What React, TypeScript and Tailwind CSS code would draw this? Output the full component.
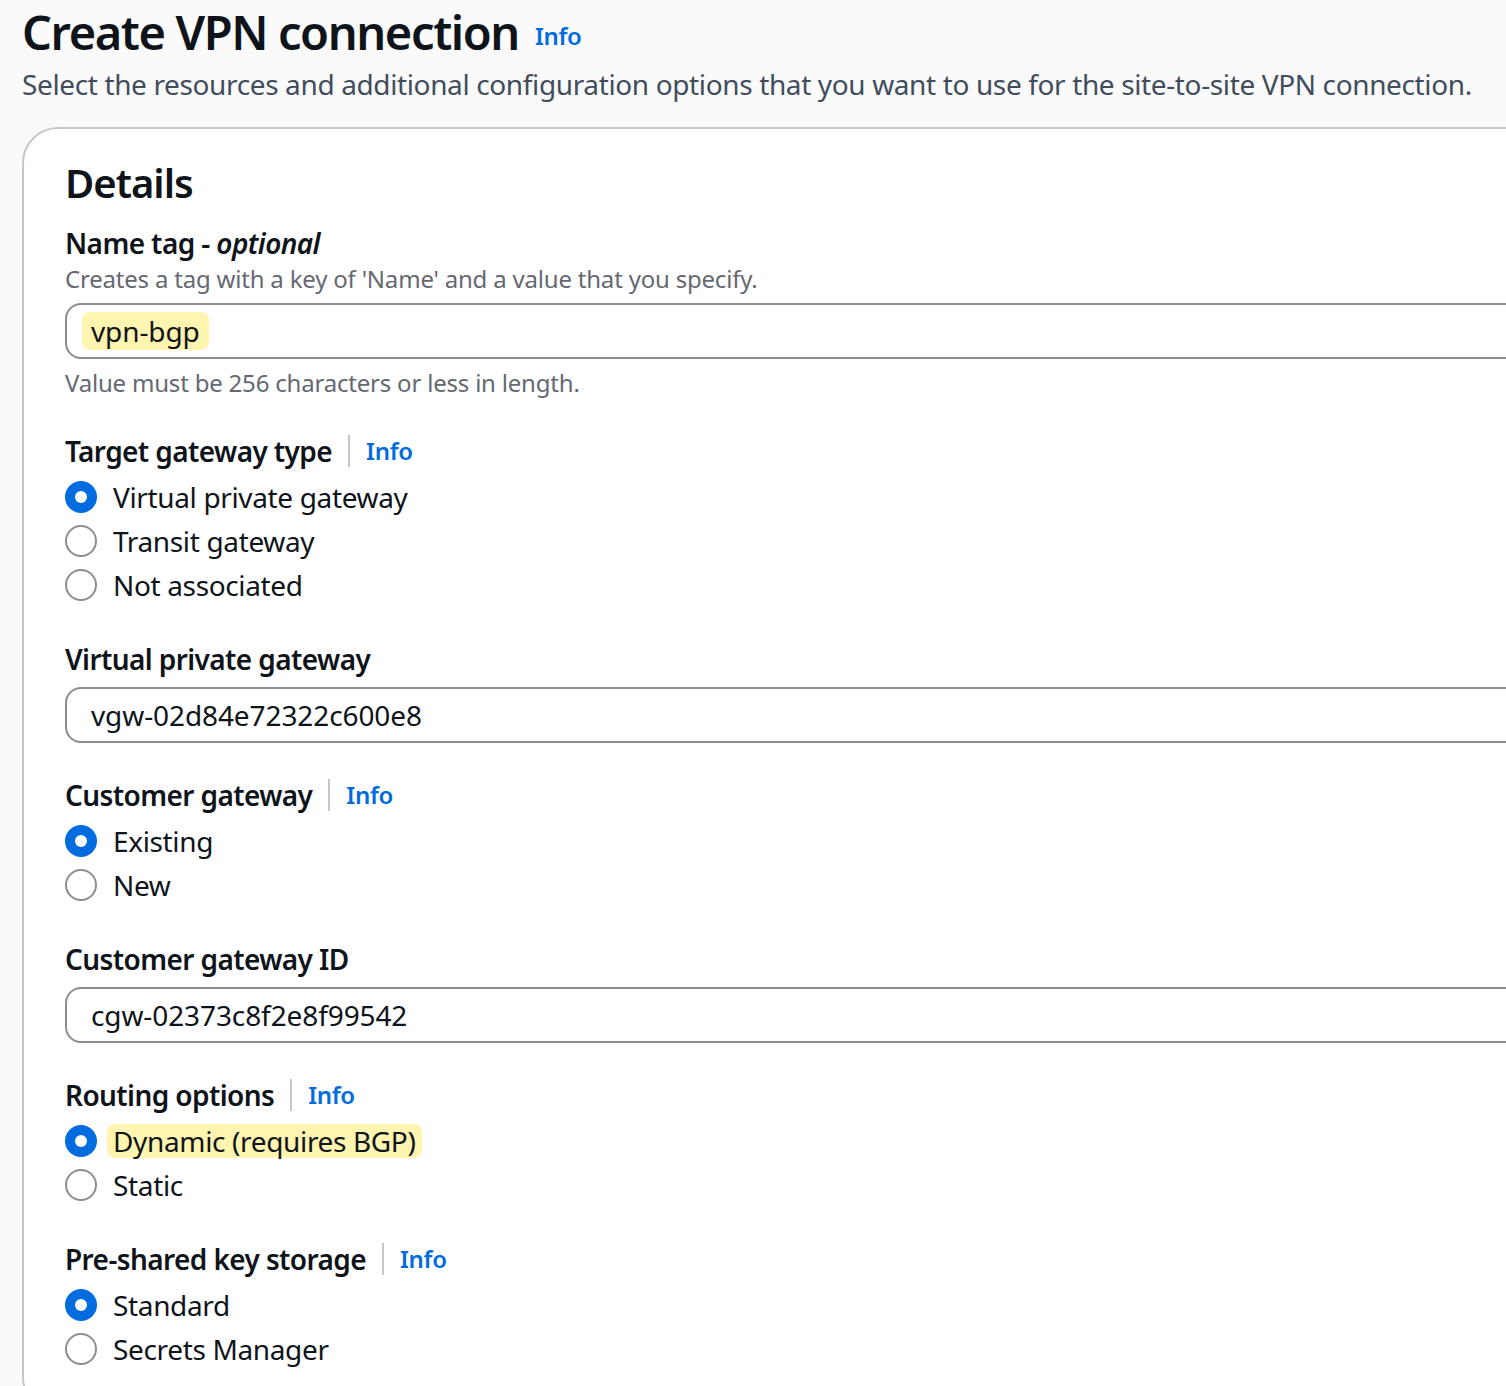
import React from "react";

const font = "[font-family:'Noto_Sans','Open_Sans',sans-serif]";

function Info() {
  return <span className="text-[24px] font-semibold tracking-[-0.3px] text-[#006ce0]">Info</span>;
}

function FieldLabel({ label, info }: { label: React.ReactNode; info?: boolean }) {
  return (
    <div className="flex h-10 items-center">
      <span className="text-[28px] font-semibold leading-10 tracking-[-0.6px] text-[#0f141a]">{label}</span>
      {info && (
        <>
          <span className="mx-4 h-8 w-[2px] bg-[#c6c6cd]" />
          <Info />
        </>
      )}
    </div>
  );
}

function Radio({ checked, label, highlight }: { checked?: boolean; label: string; highlight?: boolean }) {
  return (
    <div className="flex h-11 items-center gap-4">
      {checked ? (
        <span className="flex h-8 w-8 items-center justify-center rounded-full bg-[#006ce0]">
          <span className="h-3 w-3 rounded-full bg-white" />
        </span>
      ) : (
        <span className="h-8 w-8 rounded-full border-2 border-[#8c8c94] bg-white" />
      )}
      <span
        className={`text-[28px] leading-10 tracking-[-0.35px] text-[#0f141a] ${
          highlight ? "-ml-[6px] rounded-lg bg-[#fff5b0] px-[6px] leading-[34px]" : ""
        }`}
      >
        {label}
      </span>
    </div>
  );
}

function TextInput({ children }: { children: React.ReactNode }) {
  return (
    <div className="flex h-14 items-center rounded-2xl border-2 border-[#8c8c94] bg-white pl-6 text-[28px] tracking-[-0.1px] text-[#0f141a]">
      {children}
    </div>
  );
}

export default function App() {
  return (
    <div className={`${font} h-[1386px] w-[1506px] overflow-hidden bg-[#fafafa] pl-[22px] pt-1`}>
      <div className="flex h-14 items-center gap-4">
        <h1 className="text-[47px] font-semibold leading-[56px] tracking-[-1.4px] text-[#0f141a]">
          Create VPN connection
        </h1>
        <span className="mt-2">
          <Info />
        </span>
      </div>
      <p className="mt-1 whitespace-nowrap text-[28px] leading-10 tracking-[-0.37px] text-[#414d5c]">
        Select the resources and additional configuration options that you want to use for the site-to-site VPN connection.
      </p>

      <div className="mt-[23px] w-[1560px] rounded-[36px] border-2 border-[#c6c6cd] bg-white pb-10 pl-[41px] pr-10 pt-[30px]">
        <h2 className="text-[40px] font-semibold leading-[48px] tracking-[-1px] text-[#0f141a]">Details</h2>

        <div className="mt-4 flex flex-col gap-8">
          <div>
            <FieldLabel
              label={
                <>
                  Name tag - <i>optional</i>
                </>
              }
            />
            <p className="text-[24px] leading-8 tracking-[-0.2px] text-[#656871]">
              Creates a tag with a key of 'Name' and a value that you specify.
            </p>
            <div className="mt-2">
              <TextInput>
                <span className="-ml-[9px] rounded-lg bg-[#fff5b0] px-[9px] leading-[38px]">vpn-bgp</span>
              </TextInput>
            </div>
            <p className="mt-2 text-[24px] leading-8 tracking-[-0.2px] text-[#656871]">
              Value must be 256 characters or less in length.
            </p>
          </div>

          <div>
            <FieldLabel label="Target gateway type" info />
            <div className="mt-1">
              <Radio checked label="Virtual private gateway" />
              <Radio label="Transit gateway" />
              <Radio label="Not associated" />
            </div>
          </div>

          <div>
            <FieldLabel label="Virtual private gateway" />
            <div className="mt-2">
              <TextInput>vgw-02d84e72322c600e8</TextInput>
            </div>
          </div>

          <div>
            <FieldLabel label="Customer gateway" info />
            <div className="mt-1">
              <Radio checked label="Existing" />
              <Radio label="New" />
            </div>
          </div>

          <div>
            <FieldLabel label="Customer gateway ID" />
            <div className="mt-2">
              <TextInput>cgw-02373c8f2e8f99542</TextInput>
            </div>
          </div>

          <div>
            <FieldLabel label="Routing options" info />
            <div className="mt-1">
              <Radio checked highlight label="Dynamic (requires BGP)" />
              <Radio label="Static" />
            </div>
          </div>

          <div>
            <FieldLabel label="Pre-shared key storage" info />
            <div className="mt-1">
              <Radio checked label="Standard" />
              <Radio label="Secrets Manager" />
            </div>
          </div>
        </div>
      </div>
    </div>
  );
}
